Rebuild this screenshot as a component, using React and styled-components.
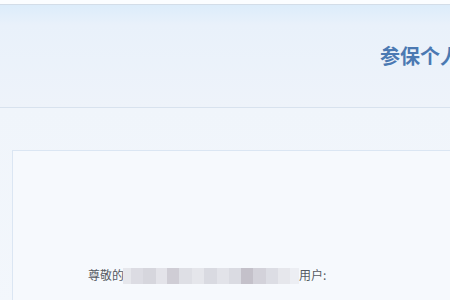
import React from "react";
import styled, { createGlobalStyle } from "styled-components";

const GlobalStyle = createGlobalStyle`
  html, body {
    margin: 0;
    padding: 0;
    background: #f3f7fc;
    font-family: "Noto Sans CJK SC", "Noto Sans", sans-serif;
    overflow: hidden;
  }
`;

const Page = styled.div`
  width: 450px;
  height: 300px;
  overflow: hidden;
  background: #f3f7fc;
`;

const TopStrip = styled.div`
  height: 4px;
  background: #fbfdff;
  border-bottom: 1px solid #d3dde8;
`;

const Header = styled.div`
  height: 102px;
  display: flex;
  align-items: center;
  background: linear-gradient(180deg, #dcecfa 0%, #e9f1fa 20%, #eef3fa 100%);
  border-bottom: 1px solid #d8e2ee;
  overflow: hidden;
`;

const Title = styled.h1`
  margin: 0;
  padding: 0 0 2px 380px;
  white-space: nowrap;
  font-size: 20px;
  font-weight: 700;
  color: #4b79b2;
`;

const Body = styled.div`
  padding: 42px 0 0 12px;
  background: linear-gradient(180deg, #f0f5fb 0%, #f3f7fc 100%);
`;

const Card = styled.div`
  height: 160px;
  border-top: 1px solid #dbe6f3;
  border-left: 1px solid #dbe6f3;
  background: #f6f9fd;
  padding: 115px 0 0 75px;
  box-sizing: border-box;
`;

const Greeting = styled.p`
  margin: 0;
  display: flex;
  align-items: center;
  font-size: 12px;
  line-height: 18px;
  color: #555a62;
`;

const Mosaic = styled.span`
  display: inline-flex;
  height: 16px;
  margin: 2px 0 0 -1px;
`;

const Tile = styled.span`
  width: ${(p) => p.w}px;
  height: 100%;
  background: ${(p) => p.c};
`;

const tiles = [
  [8, "#e6e7ec"], [12, "#dcdce3"], [13, "#d6d6dd"], [11, "#e3e3e9"],
  [12, "#cfcdd5"], [13, "#dedfe5"], [12, "#e5e6eb"], [13, "#d9dae1"],
  [12, "#e2e3e9"], [12, "#dadbe2"], [12, "#c4c1ca"], [13, "#d3d2da"],
  [12, "#dcdde4"], [12, "#e6e7ec"], [9, "#eceef3"],
];

export default function App() {
  return (
    <Page>
      <GlobalStyle />
      <TopStrip />
      <Header>
        <Title>参保个人权益记录</Title>
      </Header>
      <Body>
        <Card>
          <Greeting>
            尊敬的
            <Mosaic>
              {tiles.map(([w, c], i) => (
                <Tile key={i} w={w} c={c} />
              ))}
            </Mosaic>
            用户:
          </Greeting>
        </Card>
      </Body>
    </Page>
  );
}
